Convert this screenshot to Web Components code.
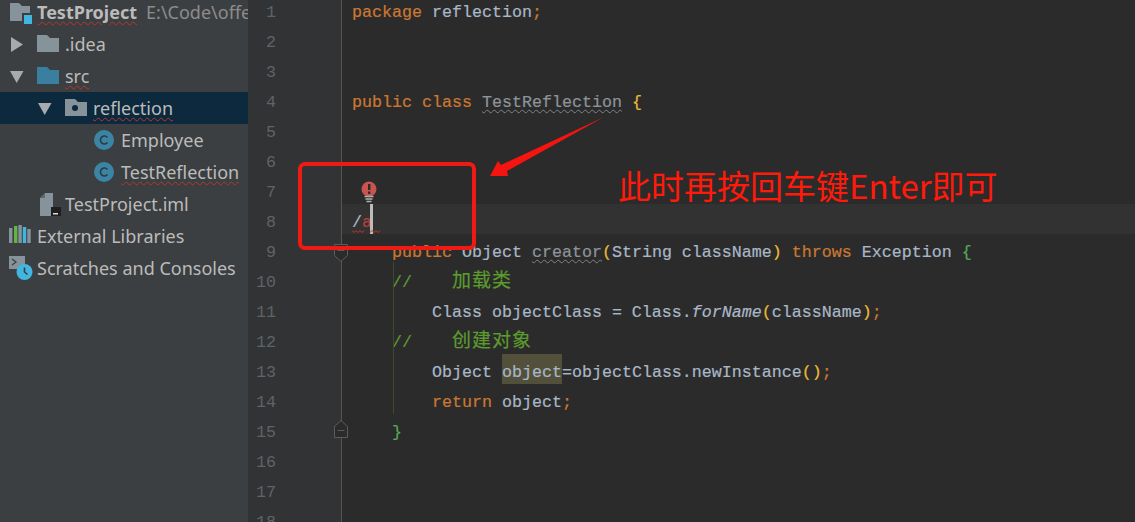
<!DOCTYPE html>
<html>
<head>
<meta charset="utf-8">
<title>TestProject</title>
<style>
  html, body { margin: 0; height: 100%; background: #2b2b2b; overflow: hidden; }
</style>
</head>
<body>
<ide-window>
  <project-tree slot="tree">
    <tree-row pad="9" icon="project"><b>TestProject</b><i>E:\Code\offer</i></tree-row>
    <tree-row pad="10" arrow="right" icon="folder">.idea</tree-row>
    <tree-row pad="10" arrow="down" icon="source"><u>src</u></tree-row>
    <tree-row pad="38" arrow="down" icon="package" selected><u>reflection</u></tree-row>
    <tree-row pad="93" icon="class">Employee</tree-row>
    <tree-row pad="93" icon="class"><u>TestReflection</u></tree-row>
    <tree-row pad="37" icon="iml">TestProject.iml</tree-row>
    <tree-row pad="9" icon="libs">External Libraries</tree-row>
    <tree-row pad="9" icon="scratch">Scratches and Consoles</tree-row>
  </project-tree>
  <code-editor slot="editor"></code-editor>
  <screen-notes slot="notes"></screen-notes>
</ide-window>

<script>
class IdeWindow extends HTMLElement {
  constructor() {
    super();
    this.attachShadow({ mode: "open" });
  }

  connectedCallback() {
    this.shadowRoot.innerHTML = `
      <style>
        :host {
          display: flex;
          position: relative;
          width: 1135px;
          height: 522px;
          overflow: hidden;
        }
        ::slotted([slot="tree"]) { flex: 0 0 248px; }
        ::slotted([slot="editor"]) { flex: 1; }
      </style>
      <slot name="tree"></slot>
      <slot name="editor"></slot>
      <slot name="notes"></slot>
    `;
  }
}

class ProjectTree extends HTMLElement {
  constructor() {
    super();
    this.attachShadow({ mode: "open" });
  }

  connectedCallback() {
    this.shadowRoot.innerHTML = `
      <style>
        :host {
          display: block;
          background: #3c3f41;
          overflow: hidden;
        }
        .rows {
          display: flex;
          flex-direction: column;
          margin-top: -4px;
        }
      </style>
      <div class="rows"><slot></slot></div>
    `;
  }
}

const TREE_ICONS = {
  project: `<path d="M1 7h9l3 3h8v15H1z" fill="#87939a"/><rect x="13" y="17" width="11" height="11" fill="#3c3f41"/><rect x="15" y="19" width="8" height="9" fill="#40b6e0"/>`,
  folder: `<path d="M0 7h10l3 3h9v14H0z" fill="#87939a"/>`,
  source: `<path d="M0 7h10l3 3h9v14H0z" fill="#3b7fa0"/>`,
  package: `<path d="M0 7h10l3 3h9v14H0z" fill="#87939a"/><circle cx="10" cy="16" r="3" fill="#0d293e"/>`,
  class: `<circle cx="11" cy="16" r="10" fill="#3b84a3"/><path d="M14.5 13.4a4 4 0 1 0 0 5.2" fill="none" stroke="#2b3b44" stroke-width="1.6"/>`,
  iml: `<path d="M3 10l5-5h8v14h-2v9H3z" fill="#87939a"/><path d="M3 10h5V5z" fill="#3c3f41" opacity=".5"/><rect x="14" y="19" width="10" height="9" fill="#1f1f1f"/><rect x="16" y="25" width="5" height="1.5" fill="#ddd"/>`,
  libs: `<rect x="0" y="8" width="3.4" height="15" fill="#87939a"/><rect x="5" y="6" width="3.4" height="17" fill="#62b543"/><rect x="9.4" y="5" width="3.4" height="18" fill="#87939a"/><rect x="13.8" y="7" width="3.4" height="16" fill="#40b6e0"/><rect x="18.3" y="9" width="3.4" height="14" fill="#87939a"/>`,
  scratch: `<rect x="0" y="4" width="16" height="13" fill="#87939a"/><path d="M3 7l4 3-4 3" fill="none" stroke="#3c3f41" stroke-width="1.3"/><circle cx="15.5" cy="20" r="8" fill="#40b6e0"/><path d="M15.5 15.5V20l3 2.5" fill="none" stroke="#3c3f41" stroke-width="1.6"/>`,
};

const TREE_ARROWS = {
  right: `<path d="M1 9l12 7.5L1 24z" fill="#a8abad"/>`,
  down: `<path d="M0 11h13.5L6.7 23z" fill="#a8abad"/>`,
};

class TreeRow extends HTMLElement {
  constructor() {
    super();
    this.attachShadow({ mode: "open" });
  }

  connectedCallback() {
    const arrow = this.getAttribute("arrow");
    const icon = this.getAttribute("icon");
    const pad = this.getAttribute("pad") || 0;
    const arrowMarkup = arrow
      ? `<svg class="arrow" width="27" height="32">${TREE_ARROWS[arrow]}</svg>`
      : "";
    this.shadowRoot.innerHTML = `
      <style>
        :host {
          display: flex;
          align-items: center;
          height: 32px;
          white-space: nowrap;
          overflow: hidden;
          color: #bbbbbb;
          font: 18px/32px "Noto Sans", "Open Sans", sans-serif;
        }
        :host([selected]) { background: #0d293e; }
        svg { flex: none; display: block; }
        ::slotted(b) {
          font-weight: 700;
          margin-right: 9px;
        }
        ::slotted(b), ::slotted(u) {
          text-decoration: underline wavy #b5352c 1px;
          text-underline-offset: 2px;
        }
        ::slotted(i) {
          font-style: normal;
          color: #8c8c8c;
        }
      </style>
      <span style="flex:none;width:${pad}px"></span>
      ${arrowMarkup}
      <svg width="28" height="32">${TREE_ICONS[icon]}</svg>
      <span><slot></slot></span>
    `;
  }
}

// k keyword, w weak warning, y/g paired brackets, c comment, e error
const CODE_LINES = [
  `<s class="k">package</s> reflection<s class="k">;</s>`,
  ``,
  ``,
  `<s class="k">public class</s> <s class="w">TestReflection</s> <s class="y">{</s>`,
  ``,
  ``,
  ``,
  `/<s class="e">a</s><s class="caret"></s>`,
  `    <s class="k">public</s> Object <s class="w">creator</s><s class="y">(</s>String className<s class="y">)</s> <s class="k">throws</s> Exception <s class="g">{</s>`,
  `    <s class="c">//    <s class="cjk">加载类</s></s>`,
  `        Class objectClass = Class.<s class="it">forName</s><s class="y">(</s>className<s class="y">)</s><s class="k">;</s>`,
  `    <s class="c">//    <s class="cjk">创建对象</s></s>`,
  `        Object <s class="hl">object</s>=objectClass.newInstance<s class="y">()</s><s class="k">;</s>`,
  `        <s class="k">return</s> object<s class="k">;</s>`,
  `    <s class="g">}</s>`,
  ``,
  ``,
  ``,
];

class CodeEditor extends HTMLElement {
  constructor() {
    super();
    this.attachShadow({ mode: "open" });
  }

  connectedCallback() {
    const rows = CODE_LINES.map((code, i) => `
      <div class="row${i === 7 ? " current" : ""}">
        <div class="num">${i + 1}</div>
        <div class="code">${code}</div>
      </div>`).join("");

    this.shadowRoot.innerHTML = `
      <style>
        :host {
          display: block;
          position: relative;
          background: #2b2b2b;
          overflow: hidden;
          font: 16.67px/30px "Liberation Mono", monospace;
          color: #a9b7c6;
        }
        .rows {
          display: flex;
          flex-direction: column;
          margin-top: -6px;
        }
        .row {
          display: grid;
          grid-template-columns: 94px 1fr;
          height: 30px;
          flex: none;
        }
        .num {
          box-sizing: border-box;
          background: #313335;
          border-right: 1px solid #555555;
          padding: 4px 65px 0 0;
          text-align: right;
          color: #606366;
          height: 30px;
        }
        .code {
          padding: 4px 0 0 10px;
          height: 26px;
          white-space: pre;
          -webkit-text-stroke: 0.2px currentColor;
        }
        .current .code { background: #323232; }
        s { text-decoration: none; }
        .k { color: #cc7832; }
        .y { color: #e8ba36; }
        .g { color: #54a857; }
        .c { color: #5c9c2e; }
        .e { color: #bc3f3c; }
        .it { font-style: italic; }
        .w {
          text-decoration: underline wavy #7f8487 1px;
          text-underline-offset: 2px;
          color: #8d9499;
        }
        .cjk {
          font: 19px/0 "Noto Sans CJK SC", sans-serif;
          letter-spacing: 1px;
        }
        .hl {
          display: inline-block;
          height: 30px;
          margin-top: -4px;
          padding-top: 4px;
          box-sizing: border-box;
          vertical-align: top;
          background: #52503a;
        }
        .caret {
          display: inline-block;
          width: 3px;
          height: 30px;
          margin-top: -4px;
          margin-left: -2px;
          vertical-align: top;
          background: #bbbbbb;
        }
        .guide {
          position: absolute;
          left: 145px;
          top: 262px;
          width: 1px;
          height: 152px;
          background: #3b4a32;
        }
        .fold {
          position: absolute;
          left: 85px;
        }
        .squiggle {
          position: absolute;
          left: 104px;
          top: 229px;
        }
        .bulb {
          position: absolute;
          left: 113px;
          top: 181px;
        }
      </style>
      <div class="rows">${rows}</div>
      <div class="guide"></div>
      <svg class="fold" style="top:243px" width="16" height="20">
        <path d="M1.5 1.5h13v11l-6.5 6-6.5-6z" fill="#2b2b2b" stroke="#5a5d5f"/>
        <path d="M4.5 7.5h7" stroke="#5a5d5f"/>
      </svg>
      <svg class="fold" style="top:420px" width="16" height="19">
        <path d="M1.5 17.5v-11l6.5-6 6.5 6v11z" fill="#2b2b2b" stroke="#5a5d5f"/>
        <path d="M4.5 10.5h7" stroke="#5a5d5f"/>
      </svg>
      <svg class="squiggle" width="30" height="4">
        <path d="M0 1.5l2 2 2-2 2 2 2-2 2 2 2-2M18 3.5l2-2 2 2 2-2 2 2 2-2" fill="none" stroke="#c0392b"/>
      </svg>
      <svg class="bulb" width="16" height="23">
        <circle cx="8" cy="8" r="7.5" fill="#c75450"/>
        <rect x="7" y="3" width="2.4" height="6" fill="#2b2b2b"/>
        <rect x="7" y="10.5" width="2.4" height="2.4" fill="#2b2b2b"/>
        <path d="M3.5 15.5h9M4.5 18h7M5.5 20.5h5" stroke="#afb1b3" stroke-width="1.4"/>
      </svg>
    `;
  }
}

class ScreenNotes extends HTMLElement {
  constructor() {
    super();
    this.attachShadow({ mode: "open" });
  }

  connectedCallback() {
    this.shadowRoot.innerHTML = `
      <style>
        :host {
          position: absolute;
          inset: 0;
          display: block;
          pointer-events: none;
        }
        svg { position: absolute; left: 0; top: 0; }
        .callout {
          position: absolute;
          left: 618px;
          top: 161px;
          white-space: nowrap;
          color: #ff1a0a;
          font: 33px/48px "Noto Sans CJK SC", sans-serif;
        }
      </style>
      <svg width="1135" height="522">
        <rect x="300" y="164" width="174" height="84" rx="5" fill="none" stroke="#f01a14" stroke-width="4"/>
        <path d="M604 117L507 171L508 176H490L498 161L501 165Z" fill="#f5140f"/>
      </svg>
      <span class="callout">此时再按回车键Enter即可</span>
    `;
  }
}

customElements.define("ide-window", IdeWindow);
customElements.define("project-tree", ProjectTree);
customElements.define("tree-row", TreeRow);
customElements.define("code-editor", CodeEditor);
customElements.define("screen-notes", ScreenNotes);
</script>
</body>
</html>
